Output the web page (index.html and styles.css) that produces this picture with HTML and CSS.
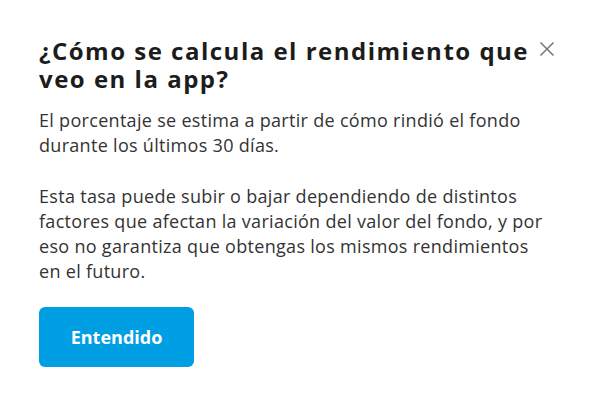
FILE: index.html
```html
<!DOCTYPE html>
<html lang="es">
<head>
    <meta charset="UTF-8">
    <meta name="viewport" content="width=device-width, initial-scale=1.0">
    <title>Rendimiento</title>
    <link rel="stylesheet" href="styles.css">
</head>
<body>
    <div class="modal">
        <div class="modal-header">
            <h1 class="modal-title">¿Cómo se calcula el rendimiento que veo en la app?</h1>
            <button class="close-btn" aria-label="Cerrar">
                <svg width="16" height="16" viewBox="0 0 16 16">
                    <path d="M1.5 1.5 L14.5 14.5 M14.5 1.5 L1.5 14.5" stroke="#7a7a7a" stroke-width="1.6" fill="none"/>
                </svg>
            </button>
        </div>

        <div class="modal-body">
            <p>El porcentaje se estima a partir de cómo rindió el fondo durante los últimos 30 días.</p>
            <p>Esta tasa puede subir o bajar dependiendo de distintos factores que afectan la variación del valor del fondo, y por eso no garantiza que obtengas los mismos rendimientos en el futuro.</p>
        </div>

        <button class="btn-primary">Entendido</button>
    </div>
</body>
</html>
```

FILE: styles.css
```css
* {
    margin: 0;
    padding: 0;
    box-sizing: border-box;
}

body {
    background-color: #ffffff;
    font-family: 'Open Sans', 'Liberation Sans', sans-serif;
    color: #333333;
}

.modal {
    width: 596px;
    padding: 37px 40px 30px 39px;
}

.modal-header {
    display: flex;
    align-items: flex-start;
    justify-content: space-between;
}

.modal-title {
    font-size: 24px;
    line-height: 28px;
    font-weight: 700;
    letter-spacing: 1.5px;
    color: #1c1c1c;
    max-width: 500px;
}

.close-btn {
    background: none;
    border: none;
    cursor: pointer;
    margin-top: 4px;
    margin-right: 1px;
    display: flex;
}

.modal-body {
    margin-top: 15px;
    max-width: 505px;
}

.modal-body p {
    font-size: 18px;
    line-height: 25px;
    letter-spacing: 0.3px;
    color: #333333;
    margin-bottom: 26px;
}

.modal-body p:last-child {
    margin-bottom: 0;
}

.btn-primary {
    margin-top: 23px;
    width: 155px;
    height: 60px;
    background-color: #009ee3;
    color: #ffffff;
    border: none;
    border-radius: 6px;
    font-family: inherit;
    font-size: 18px;
    font-weight: 700;
    cursor: pointer;
}
```
